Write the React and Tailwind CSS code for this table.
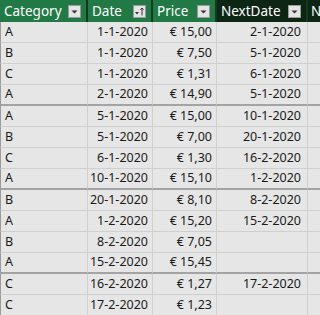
const rows = [
  ['A', '1-1-2020', '€ 15,00', '2-1-2020'],
  ['B', '1-1-2020', '€ 7,50', '5-1-2020'],
  ['C', '1-1-2020', '€ 1,31', '6-1-2020'],
  ['A', '2-1-2020', '€ 14,90', '5-1-2020', true],
  ['A', '5-1-2020', '€ 15,00', '10-1-2020'],
  ['B', '5-1-2020', '€ 7,00', '20-1-2020'],
  ['C', '6-1-2020', '€ 1,30', '16-2-2020'],
  ['A', '10-1-2020', '€ 15,10', '1-2-2020', true],
  ['B', '20-1-2020', '€ 8,10', '8-2-2020'],
  ['A', '1-2-2020', '€ 15,20', '15-2-2020'],
  ['B', '8-2-2020', '€ 7,05', ''],
  ['A', '15-2-2020', '€ 15,45', '', true],
  ['C', '16-2-2020', '€ 1,27', '17-2-2020'],
  ['C', '17-2-2020', '€ 1,23', ''],
]

function Drop({ sort }) {
  return (
    <span className="w-[13px] h-[13px] bg-[#e4e4e4] border border-[#9a9a9a] flex items-center justify-center shrink-0">
      {sort ? (
        <svg width="11" height="11" viewBox="0 0 11 11">
          <path d="M1 6 L5 6 L3 8.5 Z" fill="#333" />
          <path d="M8 9.5 L8 2 M6.3 3.8 L8 2 L9.7 3.8" stroke="#333" strokeWidth="1" fill="none" />
        </svg>
      ) : (
        <svg width="9" height="9" viewBox="0 0 9 9">
          <path d="M1.5 3.5 L7.5 3.5 L4.5 6.5 Z" fill="#333" />
        </svg>
      )}
    </span>
  )
}

function Head({ label, dark, sort }) {
  return (
    <div
      className={`h-[22px] flex items-center justify-between pl-[4px] pr-[5px] text-white text-[13.5px] whitespace-nowrap border-r-2 border-[#123a1e] ${
        dark ? 'bg-[#0d2614]' : 'bg-[#217a45]'
      }`}
    >
      <span>{label}</span>
      <Drop sort={sort} />
    </div>
  )
}

export default function App() {
  return (
    <div
      className="w-[320px] h-[315px] overflow-hidden bg-[#e6e6e6] text-[#1a1a1a]"
      style={{ fontFamily: '"Noto Sans", "Open Sans", sans-serif' }}
    >
      <div className="grid grid-cols-[88px_65px_64px_91px_12px]">
        <Head label="Category" />
        <Head label="Date" sort />
        <Head label="Price" />
        <Head label="NextDate" dark />
        <div className="h-[22px] bg-[#0d2614] text-white text-[13.5px] pl-[3px] flex items-center overflow-hidden">N</div>
        {rows.map(([cat, date, price, next, thick], i) => {
          const b = thick ? 'border-b-2 border-b-[#a3a3a3] h-[21px]' : 'border-b border-b-[#cfcfcf] h-[21px]'
          const cell = `${b} border-r border-r-[#cfcfcf] flex items-center text-[12.5px] whitespace-nowrap overflow-hidden`
          return [
            <div key={i + 'a'} className={`${cell} pl-[4px] border-l border-l-[#9a9a9a]`}>{cat}</div>,
            <div key={i + 'b'} className={`${cell} justify-end pr-[4px]`}>{date}</div>,
            <div key={i + 'c'} className={`${cell} justify-end pr-[4px]`}>{price}</div>,
            <div key={i + 'd'} className={`${cell} justify-end pr-[6px]`}>{next}</div>,
            <div key={i + 'e'} className={b}></div>,
          ]
        })}
      </div>
    </div>
  )
}
